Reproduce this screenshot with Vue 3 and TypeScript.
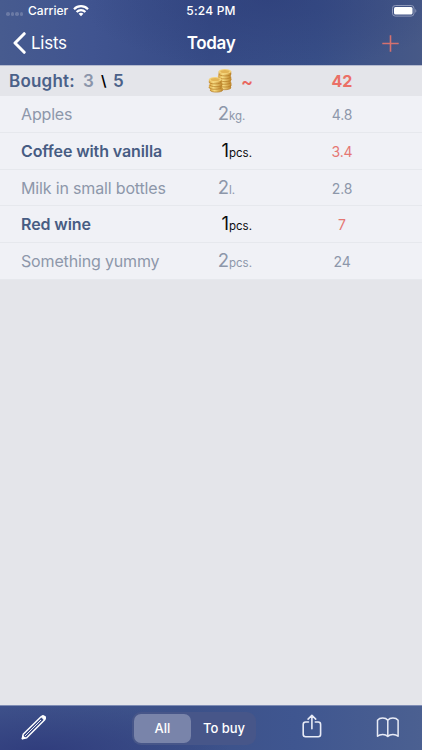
<script setup lang="ts">
import { ref } from 'vue'

interface Item {
  name: string
  amount: number
  unit: string
  price: string
  active: boolean
}

interface Coin {
  x: number
  y: number
  top: boolean
}

const items: Item[] = [
  { name: 'Apples', amount: 2, unit: 'kg.', price: '4.8', active: false },
  { name: 'Coffee with vanilla', amount: 1, unit: 'pcs.', price: '3.4', active: true },
  { name: 'Milk in small bottles', amount: 2, unit: 'l.', price: '2.8', active: false },
  { name: 'Red wine', amount: 1, unit: 'pcs.', price: '7', active: true },
  { name: 'Something yummy', amount: 2, unit: 'pcs.', price: '24', active: false },
]

const tabs = ['All', 'To buy']
const selected = ref('All')

const coins: Coin[] = [
  { x: 16.7, y: 18.4, top: false },
  { x: 17.1, y: 15.7, top: false },
  { x: 16.5, y: 13, top: false },
  { x: 17, y: 10.3, top: false },
  { x: 16.5, y: 7.6, top: false },
  { x: 16.9, y: 4.6, top: true },
  { x: 8.4, y: 20.8, top: false },
  { x: 7.2, y: 18, top: false },
  { x: 8, y: 15.4, top: false },
  { x: 7.2, y: 12.6, top: true },
]
</script>

<template>
  <div class="screen">
    <header class="top">
      <div class="status">
        <div class="carrier">
          <span class="dots"><i v-for="n in 4" :key="n" /></span>
          <span class="carrier-name">Carrier</span>
          <svg class="wifi" width="16" height="12" viewBox="0 0 16 12">
            <g fill="none" stroke="#fff" stroke-width="2.2">
              <path d="M1 4.2C5 .2 11 .2 15 4.2" />
              <path d="M3.6 7C6.2 4.4 9.8 4.4 12.4 7" />
            </g>
            <path d="M5.6 8.7C7 7.5 9 7.5 10.4 8.7L8 11.2Z" fill="#fff" />
          </svg>
        </div>
        <span class="time">5:24 PM</span>
        <div class="power">
          <svg width="25" height="12" viewBox="0 0 25 12">
            <rect x=".5" y=".5" width="21.5" height="10.6" rx="2.8" fill="none" stroke="#8e98b9" />
            <rect x="2" y="2" width="18.5" height="7.6" rx="1.5" fill="#fff" />
            <path d="M23.3 3.9C24.7 4.4 24.7 7.2 23.3 7.7Z" fill="#8e98b9" />
          </svg>
        </div>
      </div>
      <nav class="nav">
        <button class="back">
          <svg width="13" height="22" viewBox="0 0 13 22">
            <path d="M11.2 1.7L2 11L11.2 20.3" fill="none" stroke="#fff" stroke-width="3" stroke-linecap="round" stroke-linejoin="round" />
          </svg>
          <span>Lists</span>
        </button>
        <h1>Today</h1>
        <button class="add">
          <svg width="17" height="17" viewBox="0 0 17 17">
            <path d="M8.5 .3V16.7M.3 8.5H16.7" stroke="#d4716f" stroke-width="1.6" />
          </svg>
        </button>
      </nav>
    </header>

    <section class="summary">
      <div class="bought">
        <span class="label">Bought:</span>
        <span class="done">3</span>
        <span class="slash">\</span>
        <span class="total">5</span>
      </div>
      <div class="approx">
        <svg width="24" height="25" viewBox="0 0 24 25">
          <defs>
            <linearGradient id="edge" x1="0" x2="1" y1="0" y2="0">
              <stop offset="0" stop-color="#d9a443" />
              <stop offset=".35" stop-color="#f7dc83" />
              <stop offset="1" stop-color="#bd8429" />
            </linearGradient>
          </defs>
          <g v-for="(c, i) in coins" :key="i" :transform="`translate(${c.x} ${c.y})`">
            <path d="M-6.3 -1V1.2C-6.3 4 6.3 4 6.3 1.2V-1Z" fill="url(#edge)" />
            <path d="M-6.3 1.2C-6.3 4 6.3 4 6.3 1.2" fill="none" stroke="#b57b24" stroke-width=".7" />
            <template v-if="c.top">
              <ellipse cx="0" cy="-1" rx="6.3" ry="2.5" fill="#f3d27a" />
              <ellipse cx="0" cy="-1" rx="4.5" ry="1.5" fill="#e2b455" />
            </template>
          </g>
        </svg>
        <span class="tilde">~</span>
      </div>
      <strong class="sum">42</strong>
    </section>

    <ul class="list">
      <li v-for="item in items" :key="item.name" :class="{ active: item.active }">
        <span class="name">{{ item.name }}</span>
        <span class="amount">{{ item.amount }}</span>
        <span class="unit">{{ item.unit }}</span>
        <span class="price">{{ item.price }}</span>
      </li>
    </ul>

    <footer class="toolbar">
      <button class="tool pencil">
        <svg width="28" height="28" viewBox="0 0 28 28" fill="none" stroke="#fff" stroke-linejoin="round">
          <path d="M2.3 25.7L3.2 21.3L20.8 4Q22.6 2 24.4 3.7Q26 5.4 24.2 7.2L6.7 24.7Z" stroke-width="1.5" />
          <path d="M5 23L21 7" stroke-width=".9" />
          <path d="M21.4 3.8L22.8 2.7L25.3 3.5L25.3 5.8L24.2 6.9Z" fill="#fff" stroke-width="1" />
          <path d="M2.2 25.8L2.9 22.7L5.3 25.1Z" fill="#fff" />
        </svg>
      </button>
      <div class="segments">
        <button v-for="tab in tabs" :key="tab" :class="{ on: selected === tab }" @click="selected = tab">{{ tab }}</button>
      </div>
      <button class="tool share">
        <svg width="20" height="24" viewBox="0 0 20 24" fill="none" stroke="#e8ebf6" stroke-width="1.6" stroke-linecap="round" stroke-linejoin="round">
          <path d="M6.5 8H3.6Q1.2 8 1.2 10.4V20.3Q1.2 22.7 3.6 22.7H16.2Q18.6 22.7 18.6 20.3V10.4Q18.6 8 16.2 8H13.3M9.9 14.8V1.5M6.1 5.1L9.9 1.3L13.7 5.1" />
        </svg>
      </button>
      <button class="tool book">
        <svg width="24" height="21" viewBox="0 0 24 21" fill="none" stroke="#e8ebf6" stroke-width="1.5" stroke-linejoin="round">
          <path d="M11.8 3.2C9.5 .3 3.9 .3 1.5 3.2V19.3C4 17 9.5 16.9 11.8 19.5C14.1 16.9 19.6 17 22.1 19.3V3.2C19.7 .3 14.1 .3 11.8 3.2V19.5" />
        </svg>
      </button>
    </footer>
  </div>
</template>

<style>
body {
  margin: 0;
}
</style>

<style scoped>
.screen {
  width: 422px;
  height: 750px;
  display: flex;
  flex-direction: column;
  overflow: hidden;
  background: #e4e5ea;
  font-family: Inter, 'Liberation Sans', sans-serif;
  color: #fff;
}
button {
  border: 0;
  padding: 0;
  margin: 0;
  background: none;
  color: inherit;
  font: inherit;
  display: flex;
  align-items: center;
}
svg {
  display: block;
  flex: none;
}
.top {
  height: 65px;
  flex: none;
  border-bottom: 1px solid #b5bbcf;
  background:
    radial-gradient(ellipse 190px 70px at 270px 0, rgba(45, 61, 120, 0.6) 0%, rgba(45, 61, 120, 0) 100%),
    linear-gradient(90deg, #475b8f 0%, #405490 22%, #364b86 50%, #384f88 75%, #475987 100%);
}
.status {
  height: 21px;
  display: grid;
  grid-template-columns: 1fr auto 1fr;
  align-items: center;
  font-size: 12px;
  font-weight: 500;
}
.carrier {
  display: flex;
  align-items: center;
  padding-left: 6px;
}
.dots {
  display: flex;
  gap: 1px;
  width: 22px;
  padding-top: 7px;
}
.dots i {
  width: 3.6px;
  height: 3.6px;
  border-radius: 50%;
  background: #6b7aa5;
}
.carrier-name {
  letter-spacing: 0.05px;
}
.wifi {
  margin-left: 5px;
}
.time {
  letter-spacing: 0.2px;
}
.power {
  display: flex;
  justify-content: flex-end;
  padding-right: 5px;
}
.nav {
  height: 44px;
  display: grid;
  grid-template-columns: 1fr auto 1fr;
  align-items: center;
}
.back {
  padding-left: 13px;
  gap: 5px;
  font-size: 17px;
  letter-spacing: -0.25px;
}
.nav h1 {
  margin: 0;
  font-size: 17px;
  font-weight: 600;
  letter-spacing: -0.35px;
}
.add {
  justify-content: flex-end;
  padding-right: 23.5px;
}
.summary,
.list li {
  display: grid;
  align-items: center;
}
.summary {
  height: 30px;
  flex: none;
  grid-template-columns: 208px 75px 118px;
}
.bought {
  display: flex;
  align-items: center;
  padding-left: 9px;
  font-size: 17px;
  font-weight: 600;
  color: #4b6189;
}
.label {
  width: 74px;
  letter-spacing: 0.2px;
}
.done {
  width: 18px;
  color: #8b95aa;
}
.slash {
  width: 12px;
  padding-bottom: 2px;
  font-size: 14.5px;
  color: #000;
}
.approx {
  display: flex;
  align-items: center;
  gap: 9px;
  color: #e9675f;
}
.approx svg {
  margin-bottom: 2px;
}
.tilde {
  font-size: 18px;
  font-weight: 600;
}
.sum {
  font-size: 16px;
  font-weight: 700;
  text-align: center;
  color: #eb7067;
}
.list {
  list-style: none;
  margin: 0;
  padding: 0;
  background: #f0f1f6;
  color: #8d97aa;
}
.list li {
  height: 36.8px;
  box-sizing: border-box;
  grid-template-columns: 208px 21px 54px 118px;
  align-items: baseline;
  line-height: 35.8px;
  border-bottom: 1px solid #e6e8ed;
}
.name {
  padding-left: 21px;
  font-size: 16px;
  letter-spacing: -0.16px;
}
.amount {
  text-align: right;
  font-size: 18.5px;
}
.unit {
  font-size: 11.5px;
}
.price {
  text-align: center;
  font-size: 14px;
  letter-spacing: -0.1px;
}
.active .name {
  color: #475c83;
  font-weight: 600;
  letter-spacing: -0.1px;
}
.active .amount,
.active .unit {
  color: #0c0d10;
}
.active .price {
  color: #e57773;
}
.toolbar {
  margin-top: auto;
  height: 45px;
  box-sizing: border-box;
  flex: none;
  border-top: 1px solid #7f8db5;
  display: grid;
  grid-template-columns: 132px 124px 108px 58px;
  align-items: center;
  background:
    radial-gradient(ellipse 190px 50px at 40px 46px, #303d7d 0%, rgba(48, 61, 125, 0) 100%),
    linear-gradient(90deg, #3f528b 0%, #3c5189 45%, #3f5690 70%, #4b6091 100%);
}
.pencil {
  padding: 0 0 2px 20px;
}
.share {
  padding: 0 0 5px 46px;
}
.book {
  padding: 0 0 1px 12px;
}
.segments {
  height: 33px;
  box-sizing: border-box;
  padding: 2px;
  display: grid;
  grid-template-columns: 57px 1fr;
  border-radius: 9px;
  background: #475689;
  font-size: 13px;
  font-weight: 500;
  letter-spacing: -0.15px;
}
.segments button {
  justify-content: center;
  border-radius: 7px;
}
.segments button:last-child {
  padding-left: 3px;
}
.segments .on {
  background: #7984aa;
}
</style>
